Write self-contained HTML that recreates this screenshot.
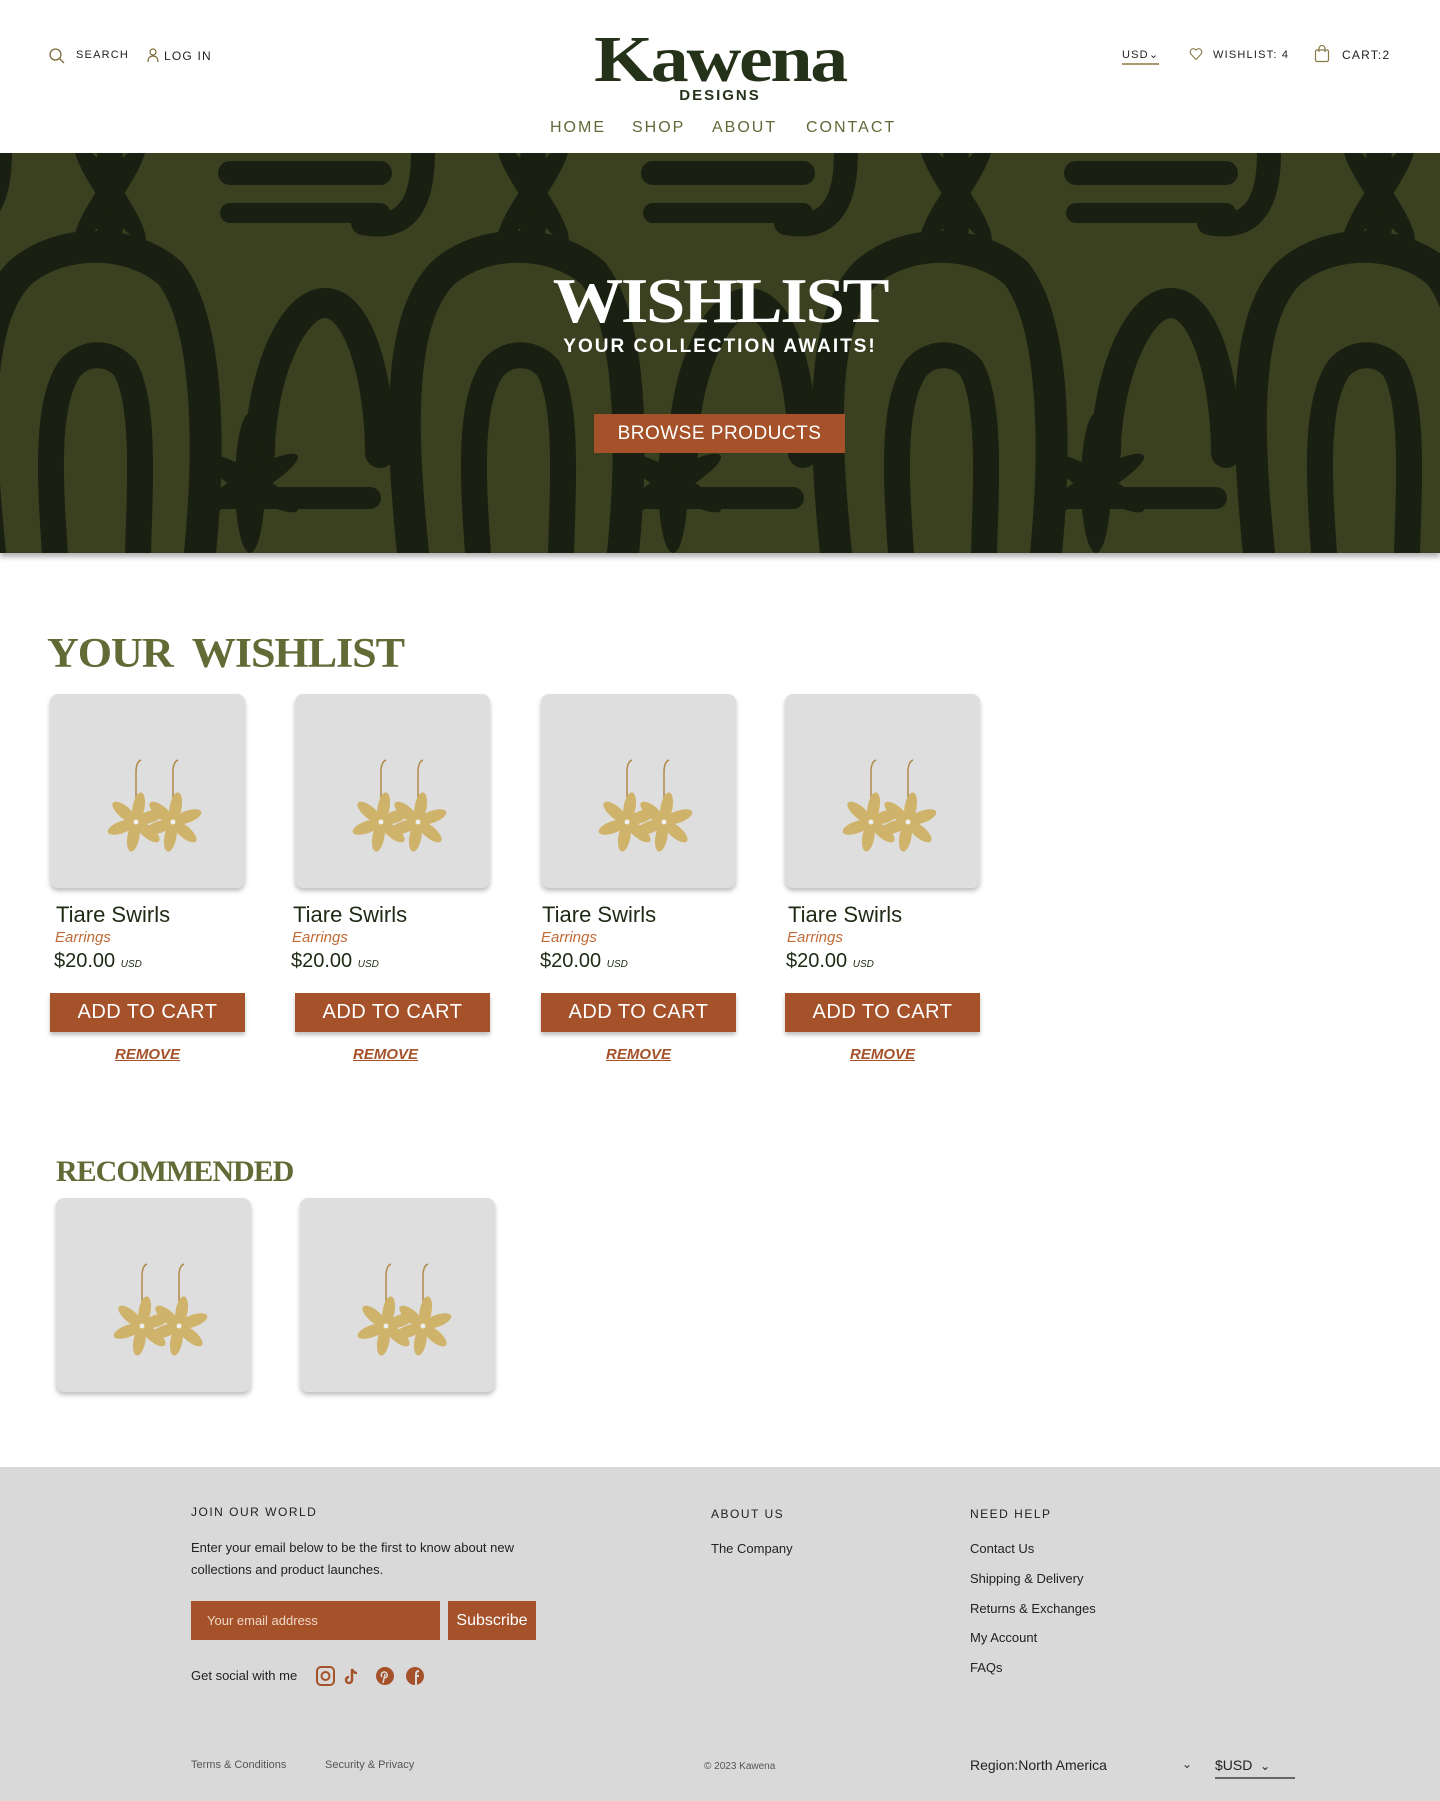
<!DOCTYPE html>
<html><head><meta charset="utf-8">
<style>
*{margin:0;padding:0;box-sizing:border-box}
body{width:1440px;height:1801px;position:relative;background:#fff;font-family:"Liberation Sans",sans-serif;overflow:hidden;color:#1f2a14}
.a{position:absolute}
.sm{font-size:11px;letter-spacing:1.2px;color:#222}
.nav{font-size:16px;letter-spacing:2px;color:#5f6a38;top:119px}
.serif{font-family:"Liberation Serif",serif;font-weight:bold}
.card{position:absolute;width:195px;height:194px;background:#dedede;border-radius:8px;box-shadow:0 3px 5px rgba(0,0,0,.25)}
.card svg{position:absolute;left:38px;top:40px}
.t{font-size:22px;color:#1f2a14}
.cat{font-size:15px;font-style:italic;color:#c06a35}
.pr{font-size:20px;color:#1f2a14}
.pr i{font-size:10px}
.btn{position:absolute;width:195px;height:39px;background:#a5522a;color:#fff;font-size:20px;text-align:center;line-height:39px;letter-spacing:.5px;box-shadow:0 3px 4px rgba(0,0,0,.25)}
.rm{font-size:15px;font-weight:bold;font-style:italic;color:#a5522a;text-decoration:underline;width:195px;text-align:center}
footer{position:absolute;left:0;top:1467px;width:1440px;height:334px;background:#d9d9d9}
.fh{font-size:12px;letter-spacing:1.5px;color:#222}
.fl{font-size:13px;color:#222}
</style></head><body>
<!-- header -->
<svg class="a" style="left:48px;top:47px" width="18" height="18" viewBox="0 0 18 18"><circle cx="7.5" cy="7.5" r="5.5" fill="none" stroke="#7a6a3a" stroke-width="1.3"/><path d="M11.5 11.5L16 16" stroke="#7a6a3a" stroke-width="1.3"/></svg>
<div class="a sm" style="left:76px;top:49px">SEARCH</div>
<svg class="a" style="left:146px;top:47px" width="14" height="16" viewBox="0 0 14 16"><circle cx="7" cy="5" r="3" fill="none" stroke="#7a6a3a" stroke-width="1.2"/><path d="M2 15c0-4 2-6 5-6s5 2 5 6" fill="none" stroke="#7a6a3a" stroke-width="1.2"/></svg>
<div class="a sm" style="left:164px;top:49px;font-size:12px">LOG IN</div>
<div class="a serif" style="left:520px;top:22px;width:400px;text-align:center;font-size:66px;color:#24321a;letter-spacing:-2px;transform:scale(1.15,1)">Kawena</div>
<div class="a" style="left:620px;top:87px;width:200px;text-align:center;font-size:15px;font-weight:bold;letter-spacing:2px;color:#24321a">DESIGNS</div>
<div class="a nav" style="left:550px">HOME</div>
<div class="a nav" style="left:632px">SHOP</div>
<div class="a nav" style="left:712px">ABOUT</div>
<div class="a nav" style="left:806px">CONTACT</div>
<div class="a sm" style="left:1122px;top:48px;border-bottom:2px solid #a89a70;padding-bottom:2px">USD&#8964;</div>
<svg class="a" style="left:1189px;top:47px" width="14" height="14" viewBox="0 0 14 14"><path d="M7 12.5L1.8 7A3 3 0 01 7 3a3 3 0 0 1 5.2 4z" fill="none" stroke="#8a7a4a" stroke-width="1.1"/></svg>
<div class="a sm" style="left:1213px;top:49px">WISHLIST: 4</div>
<svg class="a" style="left:1314px;top:45px" width="16" height="18" viewBox="0 0 16 18"><rect x="1.5" y="5" width="13" height="11.5" rx="1.5" fill="none" stroke="#8a7a4a" stroke-width="1.2"/><path d="M5 7V3.5a3 3 0 0 1 6 0V7" fill="none" stroke="#8a7a4a" stroke-width="1.2"/></svg>
<div class="a sm" style="left:1342px;top:48px;font-size:12px">CART:2</div>
<!-- hero -->
<div class="a" style="left:0;top:153px;width:1440px;height:400px;overflow:hidden;background:#3b4021;box-shadow:0 4px 5px rgba(0,0,0,.3)">
<svg width="1440" height="400">
<defs><g id="tile">
<g fill="none" stroke="#1a2011" stroke-linecap="round">
<path d="M30 400 C20 300 10 170 60 120 C100 85 170 85 210 120 C250 170 250 300 240 400" stroke-width="32"/>
<path d="M95 400 C90 330 85 250 110 215 C125 198 150 198 165 215 C185 250 180 330 178 400" stroke-width="26"/>
<path d="M-20 70 C30 80 40 40 40 0" stroke-width="24"/>
<path d="M270 20 H420" stroke-width="24"/><path d="M270 60 H420" stroke-width="20"/>
<path d="M300 300 C300 230 330 150 365 150 C400 150 420 230 420 300" stroke-width="30"/>
<path d="M265 345 H410" stroke-width="22"/>
</g>
<g fill="#1a2011">
<ellipse cx="150" cy="40" rx="15" ry="70"/><ellipse cx="150" cy="40" rx="12" ry="60" transform="rotate(35 150 40)"/><ellipse cx="150" cy="40" rx="12" ry="60" transform="rotate(-35 150 40)"/>
<ellipse cx="290" cy="330" rx="15" ry="70"/><ellipse cx="290" cy="330" rx="12" ry="55" transform="rotate(60 290 330)"/><ellipse cx="290" cy="330" rx="12" ry="55" transform="rotate(-60 290 330)"/>
</g></g></defs>
<use href="#tile" x="-40"/><use href="#tile" x="383"/><use href="#tile" x="806"/><use href="#tile" x="1229"/>
</svg></div>
<div class="a serif" style="left:470px;top:264px;width:500px;text-align:center;font-size:64px;color:#fff;letter-spacing:-2px;transform:scale(1.1,1)">WISHLIST</div>
<div class="a" style="left:520px;top:336px;width:400px;text-align:center;font-size:19px;font-weight:bold;letter-spacing:2px;color:#fff">YOUR COLLECTION AWAITS!</div>
<div class="a" style="left:594px;top:414px;width:251px;height:39px;background:#a5522a;color:#fff;font-size:19px;text-align:center;line-height:39px;letter-spacing:.5px">BROWSE PRODUCTS</div>
<!-- wishlist -->
<div class="a serif" style="left:47px;top:630px;font-size:42px;color:#626b36;letter-spacing:-1px;transform:scale(1.05,1);transform-origin:left">YOUR&nbsp; WISHLIST</div>
<svg width="0" height="0" style="position:absolute"><defs>
<g id="f"><g fill="#cfb36a"><ellipse cx="0" cy="-15" rx="6" ry="15" transform="rotate(10)"/><ellipse cx="0" cy="-15" rx="6" ry="15" transform="rotate(70)"/><ellipse cx="0" cy="-15" rx="6" ry="15" transform="rotate(130)"/><ellipse cx="0" cy="-15" rx="6" ry="15" transform="rotate(190)"/><ellipse cx="0" cy="-15" rx="6" ry="15" transform="rotate(250)"/><ellipse cx="0" cy="-15" rx="6" ry="15" transform="rotate(310)"/></g><circle r="2.5" fill="#eee"/></g>
<g id="e"><path d="M48 72 V38 q0-10 5-12" fill="none" stroke="#b08a4a" stroke-width="1.5"/><path d="M85 72 V38 q0-10 5-12" fill="none" stroke="#b08a4a" stroke-width="1.5"/><use href="#f" x="48" y="88"/><use href="#f" x="85" y="88"/></g>
</defs></svg>
<div class="card" style="left:50px;top:694px"><svg width="130" height="130"><use href="#e"/></svg></div>
<div class="card" style="left:295px;top:694px"><svg width="130" height="130"><use href="#e"/></svg></div>
<div class="card" style="left:541px;top:694px"><svg width="130" height="130"><use href="#e"/></svg></div>
<div class="card" style="left:785px;top:694px"><svg width="130" height="130"><use href="#e"/></svg></div>
<div class="a t" style="left:56px;top:902px">Tiare Swirls</div><div class="a t" style="left:293px;top:902px">Tiare Swirls</div><div class="a t" style="left:542px;top:902px">Tiare Swirls</div><div class="a t" style="left:788px;top:902px">Tiare Swirls</div>
<div class="a cat" style="left:55px;top:929px">Earrings</div><div class="a cat" style="left:292px;top:929px">Earrings</div><div class="a cat" style="left:541px;top:929px">Earrings</div><div class="a cat" style="left:787px;top:929px">Earrings</div>
<div class="a pr" style="left:54px;top:950px">$20.00 <i>USD</i></div><div class="a pr" style="left:291px;top:950px">$20.00 <i>USD</i></div><div class="a pr" style="left:540px;top:950px">$20.00 <i>USD</i></div><div class="a pr" style="left:786px;top:950px">$20.00 <i>USD</i></div>
<div class="btn" style="left:50px;top:993px">ADD TO CART</div><div class="btn" style="left:295px;top:993px">ADD TO CART</div><div class="btn" style="left:541px;top:993px">ADD TO CART</div><div class="btn" style="left:785px;top:993px">ADD TO CART</div>
<div class="a rm" style="left:50px;top:1046px">REMOVE</div><div class="a rm" style="left:288px;top:1046px">REMOVE</div><div class="a rm" style="left:541px;top:1046px">REMOVE</div><div class="a rm" style="left:785px;top:1046px">REMOVE</div>
<!-- recommended -->
<div class="a serif" style="left:56px;top:1155px;font-size:30px;color:#626b36;letter-spacing:-1px">RECOMMENDED</div>
<div class="card" style="left:56px;top:1198px"><svg width="130" height="130"><use href="#e"/></svg></div>
<div class="card" style="left:300px;top:1198px"><svg width="130" height="130"><use href="#e"/></svg></div>
<!-- footer -->
<footer>
<div class="a fh" style="left:191px;top:38px">JOIN OUR WORLD</div>
<div class="a fl" style="left:191px;top:70px;line-height:22px;width:360px">Enter your email below to be the first to know about new collections and product launches.</div>
<div class="a" style="left:191px;top:134px;width:249px;height:39px;background:#a5522a;color:#f0d8c8;font-size:13px;line-height:39px;padding-left:16px">Your email address</div>
<div class="a" style="left:448px;top:134px;width:88px;height:39px;background:#a5522a;color:#fff;font-size:16px;line-height:39px;text-align:center">Subscribe</div>
<div class="a fl" style="left:191px;top:201px">Get social with me</div>
<svg class="a" style="left:315px;top:198px" width="110" height="22" viewBox="0 0 110 22">
<rect x="2" y="2" width="17" height="18" rx="4" fill="none" stroke="#a5522a" stroke-width="2"/><circle cx="10.5" cy="11" r="4" fill="none" stroke="#a5522a" stroke-width="2"/>
<path d="M37 4v11a3 3 0 1 1-3-3M37 4c1 3 3 4 5 4" fill="none" stroke="#a5522a" stroke-width="2.5"/>
<circle cx="70" cy="11" r="9" fill="#a5522a"/><path d="M68 18l2-9m-1 4a3 3 0 1 0-2-1" fill="none" stroke="#d9d9d9" stroke-width="1.5"/>
<circle cx="100" cy="11" r="9" fill="#a5522a"/><path d="M101 20v-9h3m-3 0c0-3 0-5 3-5" fill="none" stroke="#d9d9d9" stroke-width="2"/>
</svg>
<div class="a fh" style="left:711px;top:40px">ABOUT US</div>
<div class="a fl" style="left:711px;top:74px">The Company</div>
<div class="a fh" style="left:970px;top:40px">NEED HELP</div>
<div class="a fl" style="left:970px;top:74px">Contact Us</div>
<div class="a fl" style="left:970px;top:104px">Shipping &amp; Delivery</div>
<div class="a fl" style="left:970px;top:134px">Returns &amp; Exchanges</div>
<div class="a fl" style="left:970px;top:163px">My Account</div>
<div class="a fl" style="left:970px;top:193px">FAQs</div>
<div class="a" style="left:191px;top:292px;font-size:11px;color:#555">Terms &amp; Conditions</div>
<div class="a" style="left:325px;top:292px;font-size:11px;color:#555">Security &amp; Privacy</div>
<div class="a" style="left:704px;top:294px;font-size:10px;color:#555">© 2023 Kawena</div>
<div class="a" style="left:970px;top:290px;font-size:14px;color:#222">Region:North America</div>
<div class="a" style="left:1182px;top:290px;font-size:12px;color:#333">&#8964;</div>
<div class="a" style="left:1215px;top:290px;font-size:14px;color:#222;width:80px;border-bottom:2px solid #666;padding-bottom:4px">$USD &nbsp;<span style="font-size:12px">&#8964;</span></div>
</footer>
</body></html>
